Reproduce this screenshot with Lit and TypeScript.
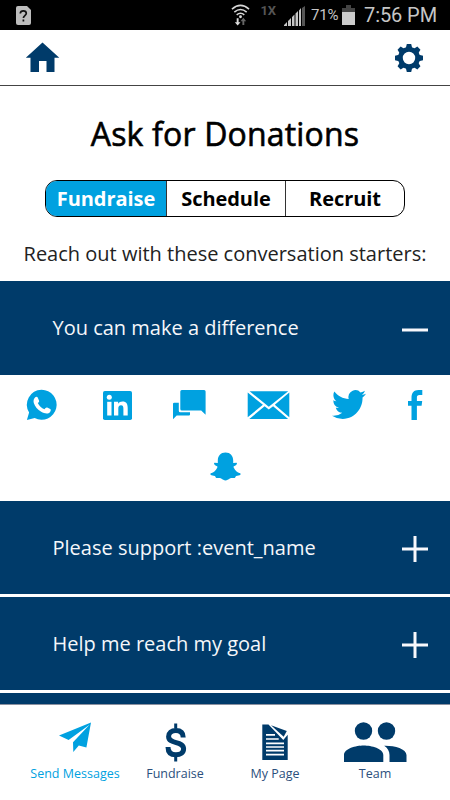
import { LitElement, html, svg, css } from "lit";
import { customElement, property } from "lit/decorators.js";

const box = (cls: string, viewBox: string, content: unknown) =>
  html`<svg class=${cls} viewBox=${viewBox} preserveAspectRatio="none" aria-hidden="true">${content}</svg>`;

const whatsapp = box("w31", "26 389 31 32", svg`
  <path d="M41.6 389.8a15 15 0 1 1-6.9 28.3L26.9 420l2.2-7.4a15 15 0 0 1 12.5-22.8z"/>
  <path fill="#fff" d="M35.2 397.3c1-.8 2-.8 2.5.1l1.3 3c.5 1.1-.2 1.8-1.2 2.7 1.4 3 3.6 5 6.7 6.200c1-1.300 1.600-2.100 2.700-1.700l3 1.500c1 .600.6 1.800-.1 2.800-2 2.400-5.600 1.600-8.900-.2-3.600-2-6.300-5.200-7.400-8.700-.6-2.300-.100-4.300 1.400-5.700z"/>`);

const linkedin = box("w31", "102 389 31 32", svg`
  <rect x="103" y="391" width="29" height="29" rx="1.8"/>
  <g fill="#fff"><circle cx="109.3" cy="397.2" r="2.5"/><rect x="107.2" y="401.8" width="4.300" height="13.700"/>
  <path d="M114 401.800h4.100v1.900c1-1.600 2.500-2.300 4.300-2.300 4.200 0 5.300 2.700 5.300 6.700v7.400h-4.300v-6.700c0-2-.3-3.600-2.400-3.600-2 0-2.700 1.500-2.700 3.500v6.800H114z"/></g>`);

const chat = box("w34", "172 389 34 32", svg`
  <path d="M181.800 390h22.300q1.500 0 1.500 1.500v23.200l-4.400-4.100h-19.400q-1.500 0-1.500-1.500v-17.600q0-1.500 1.500-1.500z"/>
  <path d="M174.300 402.700h4.500v8q0 1.500 1.500 1.500h9.700v2.300q0 1-1 1h-12.300l-3.700 3.700v-15.500q0-1 1.300-1z"/>`);

const mail = box("w43", "247 389 43 32", svg`
  <path d="M249.600 391.300h38.600l-19.400 15.500zM247.700 392.600l15.200 12.200-15.200 12.500zM289.300 392.600v24.700l-14.500-12.500zM249.300 419l15.300-12.800 4.200 3.400 4.300-3.400 15 12.800z"/>`);

const twitter = box("w34 tall29", "0 2.1 24 19.7", svg`
  <path d="M23.953 4.57a10 10 0 01-2.825.775 4.958 4.958 0 002.163-2.723c-.951.555-2.005.959-3.127 1.184a4.92 4.92 0 00-8.384 4.482C7.69 8.095 4.067 6.13 1.64 3.162a4.822 4.822 0 00-.666 2.475c0 1.710.87 3.213 2.188 4.096a4.904 4.904 0 01-2.228-.616v.06a4.923 4.923 0 003.946 4.827 4.996 4.996 0 01-2.212.085 4.936 4.936 0 004.604 3.417 9.867 9.867 0 01-6.102 2.105c-.39 0-.779-.023-1.170-.067a13.995 13.995 0 007.557 2.209c9.053 0 13.998-7.496 13.998-13.985 0-.21 0-.42-.015-.63A9.935 9.935 0 0024 4.590z"/>`);

const facebook = box("w15", "408 389 15 32", svg`
  <path d="M411.500 420v-14.300h-3.500v-4.800h3.500v-3.200c0-5 2.500-7.700 7-7.700h3.800v4.900h-2.800c-2 0-2.600.9-2.600 2.600v3.400h5.300l-.6 4.800h-4.700V420z"/>`);

const snapchat = box("w31 tall29", "209.500 452 31 29", svg`
  <path d="M225 452.500c4.700 0 7.700 3.500 7.700 8v2.400l3.400-.1c1 .8.100 2.300-2.100 3.200-1 .5-1.200.8-.8 1.600 1.300 2.900 3.500 4.900 6.400 5.700 1 .400.700 1.500-.5 2l-3.400.8c-.6 0-.7 1.800-1.500 1.900-1.600.100-3.300-.4-4.900.5-1.500.9-2.700 1.900-4.300 1.900s-2.800-1-4.300-1.900c-1.600-.9-3.300-.4-4.900-.5-.8-.1-.9-1.900-1.500-1.900l-3.400-.8c-1.200-.5-1.500-1.600-.5-2 2.900-.8 5.100-2.800 6.400-5.700.4-.8.200-1.100-.8-1.600-2.200-.9-3.100-2.400-2.100-3.200l3.400.1v-2.400c0-4.500 3-8 7.700-8z"/>`);

const home = box("home", "25 42 35 31", svg`
  <path d="M42.500 42.500 59.300 57.800H54.500V72H46.500V61H39V72H30.500V57.800H25.800z"/>`);

const gear = box("gear", "-15 -15 30 30", svg`
  <circle r="8.600" fill="none" stroke="currentColor" stroke-width="4.800"/>
  ${[0, 45, 90, 135, 180, 225, 270, 315].map(
    (a) => svg`<path transform="rotate(${a})" d="M-3.200-10-2.200-14H2.200L3.200-10z"/>`
  )}`);

const plane = box("nav-icon", "0 0 70 50", svg`
  <path d="M51 12.500 46.400 37.500 38.800 35.600 33.300 42 33 32.200 49.500 14.800 28.600 30 19 25.500z"/>`);

const dollar = box("nav-icon", "0 0 70 50", svg`
  <path d="M34.200 13.500h3v5h-3zM34.200 46.200h3v5.300h-3z"/>
  <path fill="none" stroke="currentColor" stroke-width="5" d="M43.200 27.500c0-4.500-2.600-7-7.300-7-4.500 0-7.300 2.300-7.300 6 0 8.300 15 4 15 12.300 0 4-3.200 6-7.700 6-5 0-7.900-2.600-7.900-7.800"/>`);

const page = box("nav-icon", "0 0 70 50", svg`
  <path d="M22.300 14.500h6.200L43.300 30l4.400-5.300V50H22.300z"/>
  <path d="M31 15.300 46.800 21 43.700 26.800z"/>
  <path stroke="#fff" stroke-width="1.700" fill="none" d="M26 24.800h9M26 29h12.700M26 33.300h18M26 37h18M26 40.700h18M26 44.600h18"/>`);

const team = box("nav-icon", "0 0 70 50", svg`
  <circle cx="23.500" cy="21" r="8.700"/><circle cx="46.500" cy="21" r="8.700"/>
  <path d="M4 52v-7c0-6.500 12-9.500 19.700-9.500S43.300 38.500 43.300 45v7zM44.200 35.700c9.500-.3 22.300 2.800 22.300 9.300v7H49.500v-7c0-4.200-2-7-5.300-9.300z"/>`);

@customElement("starter-row")
class StarterRow extends LitElement {
  @property() label = "";
  @property({ type: Boolean, reflect: true }) open = false;
  static styles = css`
    :host { display: flex; align-items: center; justify-content: space-between; height: 93px; background: #003b6a; color: #f5f7fa; padding: 0 22px 0 52.500px; box-sizing: border-box; flex: none; }
    :host([open]) { height: 94px; }
    .label { font-size: 20px; line-height: 28px; white-space: nowrap; }
    .sign { width: 26px; height: 26px; margin-top: 3px; stroke: #f8f8fc; stroke-width: 3; }
  `;
  render() {
    return html`<span class="label">${this.label}</span>
      <svg class="sign" viewBox="0 0 26 26"><path d=${this.open ? "M0 13H26" : "M0 13H26M13 0V26"} /></svg>`;
  }
}

@customElement("app-root")
class AppRoot extends LitElement {
  static styles = css`
    :host { display: flex; flex-direction: column; width: 450px; height: 800px; overflow: hidden; background: #fff; color: #000; font-family: "Open Sans", "Noto Sans", sans-serif; }
    svg { display: block; fill: currentColor; overflow: visible; }
    .status { height: 30px; flex: none; background: #000; color: #c6c6c6; font-family: Roboto, sans-serif; display: flex; align-items: center; padding: 0 13px 0 16px; box-sizing: border-box; }
    .sim { width: 15px; height: 19px; margin-right: auto; }
    .wifi { width: 19px; height: 22px; }
    .net { font-size: 13px; font-weight: 700; color: #555; margin: -9px 8px 0 10px; }
    .signal { width: 21px; height: 20px; margin-top: 1px; }
    .percent { font-size: 15px; letter-spacing: -.2px; margin-left: 6px; width: 28px; white-space: nowrap; }
    .battery { width: 13px; height: 20px; margin: -1px 0 0 3px; }
    .clock { font-size: 20px; letter-spacing: -.1px; margin-left: 9px; white-space: nowrap; }
    .top { height: 56px; flex: none; border-bottom: 1px solid #444; box-sizing: border-box; display: flex; align-items: center; justify-content: space-between; padding: 0 26px 0 25px; color: #003b6a; }
    .home { width: 35px; height: 31px; }
    .gear { width: 30px; height: 30px; margin-top: 1px; }
    h1 { margin: 26px 0 0; font-size: 32px; font-weight: 500; letter-spacing: .18px; -webkit-text-stroke: .6px #000; line-height: 44px; text-align: center; white-space: nowrap; }
    .tabs { display: grid; grid-template-columns: 120px 119px 119px; width: 360px; height: 37px; box-sizing: border-box; margin: 24px auto 0; border: 1px solid #000; border-radius: 12px; overflow: hidden; flex: none; font-size: 20px; font-weight: 700; line-height: 35px; text-align: center; }
    .tab { margin-left: -1px; }
    .tab.on { margin-left: 0; }
    .tab + .tab { margin-left: 0; border-left: 1px solid #333; letter-spacing: -.05px; }
    .tab.on { background: #00a1e0; color: #fff; letter-spacing: -.05px; }
    .lead { font-size: 20px; line-height: 28px; height: 28px; margin: 23px 0 13px; text-align: center; white-space: nowrap; flex: none; color: #222; }
    .share { height: 126px; flex: none; color: #00a1e0; box-sizing: border-box; padding-top: 14px; }
    .row { display: grid; grid-template-columns: 76px 70px 75px 85px 76px 15px; padding-left: 26px; height: 63px; box-sizing: border-box; }
    .row svg { height: 32px; }
    .second { display: flex; justify-content: center; }
    .w31 { width: 31px; } .w34 { width: 34px; } .w43 { width: 43px; } .w15 { width: 15px; }
    .row svg.tall29 { height: 29px; margin-top: 1px; }
    .second svg { height: 29px; }
    .list { display: flex; flex-direction: column; gap: 3px; height: 203px; overflow: hidden; flex: none; }
    .nav { flex: 1; display: grid; grid-template-columns: repeat(4, 100px); justify-content: center; border-top: 1px solid #8b91a0; color: #003b6a; }
    .item { display: flex; flex-direction: column; align-items: center; padding-top: 5px; font-size: 12.500px; line-height: 16px; white-space: nowrap; }
    .item span { color: #2b4f7c; }
    .item.on, .item.on span { color: #00a1e0; }
    .nav-icon { width: 70px; height: 50px; margin-bottom: 6px; }
  `;

  render() {
    return html`
      <div class="status">
        <svg class="sim" viewBox="0 0 15 19"><path fill="#bdbdbd" d="M2 0h9l4 4v13q0 2-2 2H2q-2 0-2-2V2Q0 0 2 0z"/><path fill="none" stroke="#111" stroke-width="1.700" d="M4.300 7.500c0-1.800 1.200-2.700 3-2.700s3 1 3 2.500c0 2.300-2.900 2.300-2.900 4.700M7.400 13.500v2"/></svg>
        <svg class="wifi" viewBox="0 0 20 23"><g fill="none" stroke="#d8d8d8" stroke-width="1.700"><path d="M1 5.200q9-7.600 18 0M3.500 8.400q6.500-5.400 13 0M6 11.300q4-3.300 8 0"/></g><circle cx="10" cy="13.300" r="1.500" fill="#ddd"/><path fill="#ddd" d="M6 15h2v4h2l-3 3.500L4 19h2z"/><path fill="#666" d="M14 22h-2v-4h-2l3-3.500 3 3.500h-2z"/></svg>
        <span class="net">1X</span>
        <svg class="signal" viewBox="0 0 21 20"><path fill="#c6c6c6" d="M0 20v-1l3-3v4zM4 20v-5l3-3v8zM8 20v-9l2.500-2.500V20zM11.500 20V7.500L14 5v15zM15 20V4.500L17 2v18z"/><path fill="#555" d="M18 20V2l3-2v20z"/></svg>
        <span class="percent">71%</span>
        <svg class="battery" viewBox="0 0 13 20"><path fill="#444" d="M4 0h5v3h4v5H0V3h4z"/><path fill="#ccc" d="M0 7h13v13H0z"/></svg>
        <span class="clock">7:56 PM</span>
      </div>
      <div class="top">${home}${gear}</div>
      <h1>Ask for Donations</h1>
      <div class="tabs"><span class="tab on">Fundraise</span><span class="tab">Schedule</span><span class="tab">Recruit</span></div>
      <div class="lead">Reach out with these conversation starters:</div>
      <starter-row label="You can make a difference" open></starter-row>
      <div class="share">
        <div class="row">${whatsapp}${linkedin}${chat}${mail}${twitter}${facebook}</div>
        <div class="second">${snapchat}</div>
      </div>
      <div class="list">
        <starter-row label="Please support :event_name"></starter-row>
        <starter-row label="Help me reach my goal"></starter-row>
        <starter-row></starter-row>
      </div>
      <div class="nav">
        <div class="item on">${plane}<span>Send Messages</span></div>
        <div class="item">${dollar}<span>Fundraise</span></div>
        <div class="item">${page}<span>My Page</span></div>
        <div class="item">${team}<span>Team</span></div>
      </div>`;
  }
}
